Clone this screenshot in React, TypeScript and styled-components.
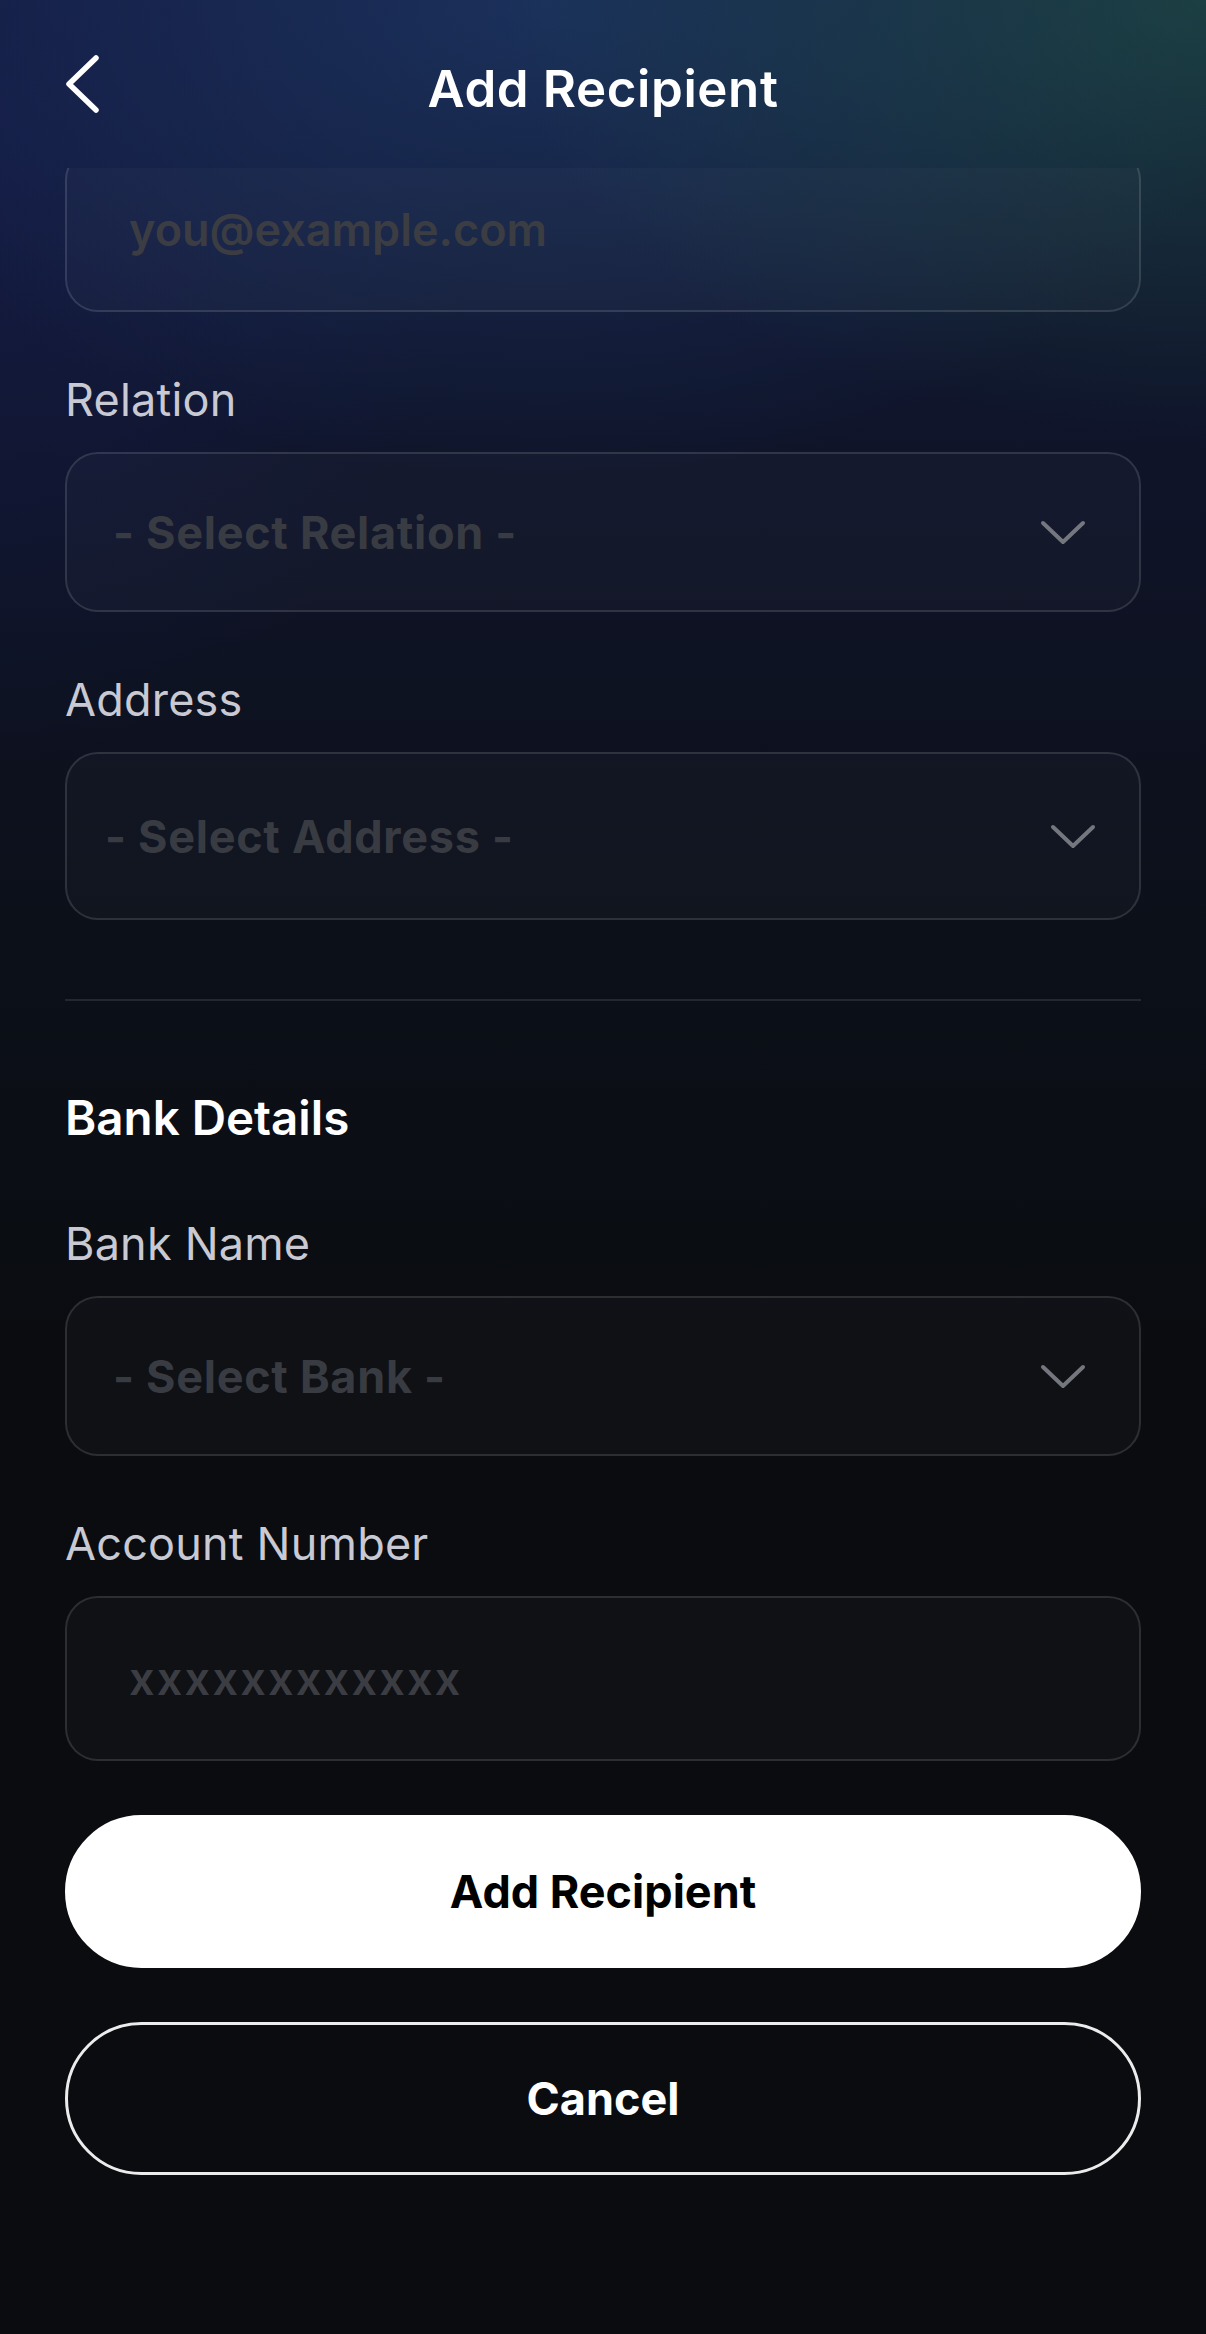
import React, { useLayoutEffect, useRef } from 'react';
import styled, { createGlobalStyle } from 'styled-components';

const GlobalStyle = createGlobalStyle`
	html, body {
		margin: 0;
		padding: 0;
		background: #0a0c10;
	}
	* {
		box-sizing: border-box;
	}
	body {
		font-family: Inter, 'Noto Sans', 'Liberation Sans', sans-serif;
		-webkit-font-smoothing: antialiased;
	}
`;

const Screen = styled.div`
	width: 1206px;
	height: 2334px;
	display: flex;
	flex-direction: column;
	overflow: hidden;
	background:
		radial-gradient(ellipse 900px 560px at 100% 0%, rgba(34, 92, 72, 0.55), rgba(34, 92, 72, 0) 78%),
		radial-gradient(ellipse 900px 600px at 45% 0%, rgba(30, 58, 105, 0.7), rgba(30, 58, 105, 0) 80%),
		radial-gradient(ellipse 600px 800px at 0% 5%, rgba(22, 30, 78, 0.6), rgba(22, 30, 78, 0) 80%),
		linear-gradient(180deg, #131a3a 0%, #0f1429 20%, #0c1019 40%, #0a0c10 58%, #0a0c10 100%);
`;

const Header = styled.header`
	flex: 0 0 168px;
	display: grid;
	grid-template-columns: 1fr auto 1fr;
	align-items: center;
	padding: 10px 65px 0;
`;

const BackButton = styled.button`
	justify-self: start;
	display: flex;
	align-items: center;
	margin: 0 0 10px;
	padding: 0;
	border: none;
	background: none;
	cursor: pointer;
`;

const Title = styled.h1`
	margin: 0;
	font-size: 51px;
	line-height: 1.2;
	font-weight: 600;
	color: #ffffff;
	letter-spacing: 0.6px;
`;

const Scroller = styled.main`
	position: relative;
	flex: 1;
	overflow: hidden;
`;

const Form = styled.form`
	display: flex;
	flex-direction: column;
	padding: 60px 65px 240px;
`;

const FieldGroup = styled.div<{ $top?: number }>`
	display: flex;
	flex-direction: column;
	gap: 61px;
	margin-top: ${({ $top }) => $top ?? 0}px;
`;

const Field = styled.div`
	display: flex;
	flex-direction: column;
	gap: 25px;
`;

const Label = styled.label`
	font-size: 45px;
	line-height: 54px;
	font-weight: 400;
	color: #c8c9d3;
	letter-spacing: 0.2px;
`;

const TextInput = styled.input<{ $h: number; $pad: number; $spacing?: number }>`
	width: 100%;
	height: ${({ $h }) => $h}px;
	padding: 0 ${({ $pad }) => $pad}px;
	border: 2px solid rgba(255, 255, 255, 0.12);
	border-radius: 33px;
	background: rgba(255, 255, 255, 0.025);
	font-family: inherit;
	font-size: 45px;
	font-weight: 600;
	color: #ffffff;
	outline: none;
	letter-spacing: ${({ $spacing }) => $spacing ?? 0}px;
	&::placeholder {
		color: #3b3d43;
	}
`;

const SelectTrigger = styled.button<{ $h: number; $pad: number; $right: number }>`
	width: 100%;
	height: ${({ $h }) => $h}px;
	display: flex;
	align-items: center;
	justify-content: space-between;
	padding: 0 ${({ $right }) => $right}px 0 ${({ $pad }) => $pad}px;
	border: 2px solid rgba(255, 255, 255, 0.12);
	border-radius: 33px;
	background: rgba(255, 255, 255, 0.025);
	font-family: inherit;
	font-size: 45px;
	font-weight: 700;
	letter-spacing: 0.7px;
	color: #393b42;
	cursor: pointer;
`;

const Divider = styled.hr`
	margin: 79px 0 0;
	border: none;
	height: 2px;
	background: rgba(255, 255, 255, 0.1);
`;

const SectionTitle = styled.h2`
	margin: 88px 0 0;
	font-size: 47.5px;
	line-height: 58px;
	font-weight: 600;
	color: #ffffff;
`;

const Actions = styled.div`
	display: flex;
	flex-direction: column;
	gap: 54px;
	margin-top: 54px;
`;

const PillButton = styled.button<{ $variant: 'solid' | 'outline' }>`
	height: 153px;
	border-radius: 999px;
	border: 3px solid ${({ $variant }) => ($variant === 'solid' ? '#ffffff' : '#ececec')};
	background: ${({ $variant }) => ($variant === 'solid' ? '#ffffff' : 'transparent')};
	color: ${({ $variant }) => ($variant === 'solid' ? '#000000' : '#ffffff')};
	font-family: inherit;
	font-size: 45px;
	font-weight: 700;
	cursor: pointer;
`;

function ChevronDown() {
	return (
		<svg width="46" height="25" viewBox="0 0 46 25" fill="none">
			<polyline points="3,3 23,22 43,3" stroke="#74777e" strokeWidth="4" strokeLinecap="round" strokeLinejoin="round" />
		</svg>
	);
}

interface SelectFieldProps {
	label: string;
	placeholder: string;
	h: number;
	pad: number;
	right: number;
}

function SelectField({ label, placeholder, h, pad, right }: SelectFieldProps) {
	return (
		<Field>
			<Label>{label}</Label>
			<SelectTrigger type="button" $h={h} $pad={pad} $right={right}>
				<span>{placeholder}</span>
				<ChevronDown />
			</SelectTrigger>
		</Field>
	);
}

export default function App() {
	const scrollRef = useRef<HTMLElement>(null);
	const emailRef = useRef<HTMLInputElement>(null);

	// the form is shown scrolled so the email box sits just under the header
	useLayoutEffect(() => {
		const s = scrollRef.current;
		const e = emailRef.current;
		if (s && e) s.scrollTop = e.offsetTop + e.offsetHeight - 144;
	}, []);

	return (
		<>
			<GlobalStyle />
			<Screen>
				<Header>
					<BackButton type="button" aria-label="Back">
						<svg width="36" height="60" viewBox="0 0 36 60" fill="none">
							<polyline points="31,4 4,30 31,56" stroke="#ffffff" strokeWidth="5.5" strokeLinecap="round" strokeLinejoin="round" />
						</svg>
					</BackButton>
					<Title>Add Recipient</Title>
				</Header>
				<Scroller ref={scrollRef}>
					<Form onSubmit={(e) => e.preventDefault()}>
						<FieldGroup>
							<Field>
								<Label htmlFor="full-name">Full Name</Label>
								<TextInput id="full-name" $h={165} $pad={62} placeholder="John Doe" />
							</Field>
							<Field>
								<Label htmlFor="phone">Phone Number</Label>
								<TextInput id="phone" $h={165} $pad={62} placeholder="+1 000 000 0000" />
							</Field>
							<Field>
								<Label htmlFor="email">Email</Label>
								<TextInput ref={emailRef} id="email" type="email" $h={165} $pad={62} placeholder="you@example.com" />
							</Field>
							<SelectField label="Relation" placeholder="- Select Relation -" h={160} pad={46} right={53} />
							<SelectField label="Address" placeholder="- Select Address -" h={168} pad={38} right={43} />
						</FieldGroup>
						<Divider />
						<SectionTitle>Bank Details</SectionTitle>
						<FieldGroup $top={70}>
							<SelectField label="Bank Name" placeholder="- Select Bank -" h={160} pad={46} right={53} />
							<Field>
								<Label htmlFor="account">Account Number</Label>
								<TextInput id="account" $h={165} $pad={62} $spacing={2.2} placeholder="xxxxxxxxxxxx" />
							</Field>
						</FieldGroup>
						<Actions>
							<PillButton type="submit" $variant="solid">Add Recipient</PillButton>
							<PillButton type="button" $variant="outline">Cancel</PillButton>
						</Actions>
					</Form>
				</Scroller>
			</Screen>
		</>
	);
}
